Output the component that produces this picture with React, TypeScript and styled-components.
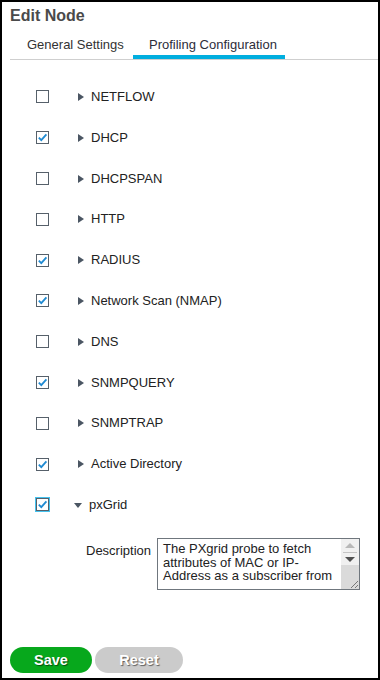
import React from "react";
import styled, { createGlobalStyle, css } from "styled-components";

const Global = createGlobalStyle`
  html, body { margin: 0; padding: 0; background: #fff; }
  body { font-family: "Liberation Sans", Arial, sans-serif; }
  * { box-sizing: border-box; }
`;

const Frame = styled.div`
  width: 380px;
  height: 680px;
  border: 2px solid #000;
  display: flex;
  flex-direction: column;
  background: #fff;
  overflow: hidden;
`;

const Title = styled.h1`
  margin: 0;
  padding: 4px 0 0 8px;
  font-size: 16px;
  line-height: 20px;
  font-weight: bold;
  color: #4a4a4a;
`;

const TabBar = styled.div`
  display: flex;
  margin: 11px 0 0 8px;
  border-bottom: 1px solid #cfcfcf;
`;

const Tab = styled.div<{ $active?: boolean; $width: number; $pad: number }>`
  width: ${(p) => p.$width}px;
  padding: 0 0 2px ${(p) => p.$pad}px;
  font-size: 13px;
  line-height: 16px;
  white-space: nowrap;
  color: ${(p) => (p.$active ? "#2d2d3a" : "#333")};
  border-bottom: 4px solid ${(p) => (p.$active ? "#00aedf" : "transparent")};
`;

const List = styled.div`
  padding-top: 16.6px;
  display: flex;
  flex-direction: column;
`;

const Row = styled.div`
  display: flex;
  align-items: center;
  height: 40.8px;
  padding-left: 34px;
`;

const Box = styled.span<{ $focused?: boolean }>`
  flex: none;
  width: 13px;
  height: 13px;
  border: 1px solid #56606a;
  background: #fff;
  display: inline-flex;
  align-items: center;
  justify-content: center;
  box-shadow: ${(p) => (p.$focused ? "0 0 0 1px #45c2ee" : "none")};
`;

const Arrow = styled.span<{ $open?: boolean }>`
  flex: none;
  width: 0;
  height: 0;
  ${(p) =>
    p.$open
      ? css`
          margin: 1px 7px 0 25px;
          border-left: 4.5px solid transparent;
          border-right: 4.5px solid transparent;
          border-top: 5px solid #4b5663;
        `
      : css`
          margin: 0 7px 0 29px;
          border-top: 4.5px solid transparent;
          border-bottom: 4.5px solid transparent;
          border-left: 6px solid #4b5663;
        `}
`;

const Label = styled.span`
  font-size: 13px;
  line-height: 16px;
  color: #222;
`;

const DescRow = styled.div`
  display: flex;
  padding-left: 84px;
  margin-top: 13px;
`;

const DescLabel = styled.span`
  width: 71px;
  padding-top: 5px;
  font-size: 13px;
  line-height: 16px;
  color: #222;
`;

const TextBox = styled.div`
  width: 203px;
  height: 52px;
  border: 1px solid #6f767d;
  display: flex;
  background: #fff;
`;

const TextContent = styled.div`
  flex: 1;
  padding: 3px 2px 0 5px;
  font-size: 13px;
  line-height: 13.3px;
  color: #222;
`;

const ScrollBar = styled.div`
  flex: none;
  width: 18px;
  display: flex;
  flex-direction: column;
  background: #f0f0f0;
`;

const ScrollBtn = styled.div<{ $h: number }>`
  height: ${(p) => p.$h}px;
  display: flex;
  align-items: center;
  justify-content: center;
`;

const TriUp = styled.span`
  width: 0;
  height: 0;
  border-left: 5px solid transparent;
  border-right: 5px solid transparent;
  border-bottom: 5px solid #b8b8b8;
`;

const TriDown = styled.span`
  width: 0;
  height: 0;
  border-left: 5px solid transparent;
  border-right: 5px solid transparent;
  border-top: 5px solid #505050;
`;

const Sep = styled.div`
  height: 1px;
  margin: 0 2px;
  background: #c4c4c4;
`;

const Track = styled.div`
  flex: 1;
  background: #dadada;
  display: flex;
  align-items: flex-end;
  justify-content: flex-end;
`;

const Footer = styled.div`
  margin-top: auto;
  padding: 0 0 5px 8px;
  display: flex;
  gap: 3px;
`;

const Button = styled.button<{ $variant: "save" | "reset"; $w: number }>`
  width: ${(p) => p.$w}px;
  height: 26px;
  border: none;
  border-radius: 13px;
  font-family: "Liberation Sans", Arial, sans-serif;
  font-size: 14.5px;
  font-weight: bold;
  color: #fff;
  padding: 0;
  text-shadow: 1px 1px 1px rgba(0, 0, 0, 0.55);
  background: ${(p) => (p.$variant === "save" ? "#07a81c" : "#cbcbcb")};
`;

const probes = [
  { name: "NETFLOW", checked: false },
  { name: "DHCP", checked: true },
  { name: "DHCPSPAN", checked: false },
  { name: "HTTP", checked: false },
  { name: "RADIUS", checked: true },
  { name: "Network Scan (NMAP)", checked: true },
  { name: "DNS", checked: false },
  { name: "SNMPQUERY", checked: true },
  { name: "SNMPTRAP", checked: false },
  { name: "Active Directory", checked: true },
];

const Check = () => (
  <svg width="11" height="11" viewBox="0 0 11 11">
    <path d="M1.8 5.6 L4.3 8.2 L9.4 2.4" fill="none" stroke="#1f8ad2" strokeWidth="1.8" />
  </svg>
);

export default function App() {
  return (
    <>
      <Global />
      <Frame>
        <Title>Edit Node</Title>
        <TabBar>
          <Tab $width={123} $pad={17}>General Settings</Tab>
          <Tab $width={152} $pad={16} $active>
            Profiling Configuration
          </Tab>
        </TabBar>
        <List>
          {probes.map((p) => (
            <Row key={p.name}>
              <Box>{p.checked && <Check />}</Box>
              <Arrow />
              <Label>{p.name}</Label>
            </Row>
          ))}
          <Row>
            <Box $focused>
              <Check />
            </Box>
            <Arrow $open />
            <Label>pxGrid</Label>
          </Row>
        </List>
        <DescRow>
          <DescLabel>Description</DescLabel>
          <TextBox>
            <TextContent>
              The PXgrid probe to fetch attributes of MAC or IP-Address as a subscriber from
            </TextContent>
            <ScrollBar>
              <ScrollBtn $h={13}>
                <TriUp />
              </ScrollBtn>
              <Sep />
              <ScrollBtn $h={12}>
                <TriDown />
              </ScrollBtn>
              <Track>
                <svg width="10" height="10" viewBox="0 0 10 10">
                  <path d="M9 2 L2 9 M9 6 L6 9" stroke="#777" strokeWidth="1" />
                </svg>
              </Track>
            </ScrollBar>
          </TextBox>
        </DescRow>
        <Footer>
          <Button $variant="save" $w={82}>Save</Button>
          <Button $variant="reset" $w={88}>Reset</Button>
        </Footer>
      </Frame>
    </>
  );
}
